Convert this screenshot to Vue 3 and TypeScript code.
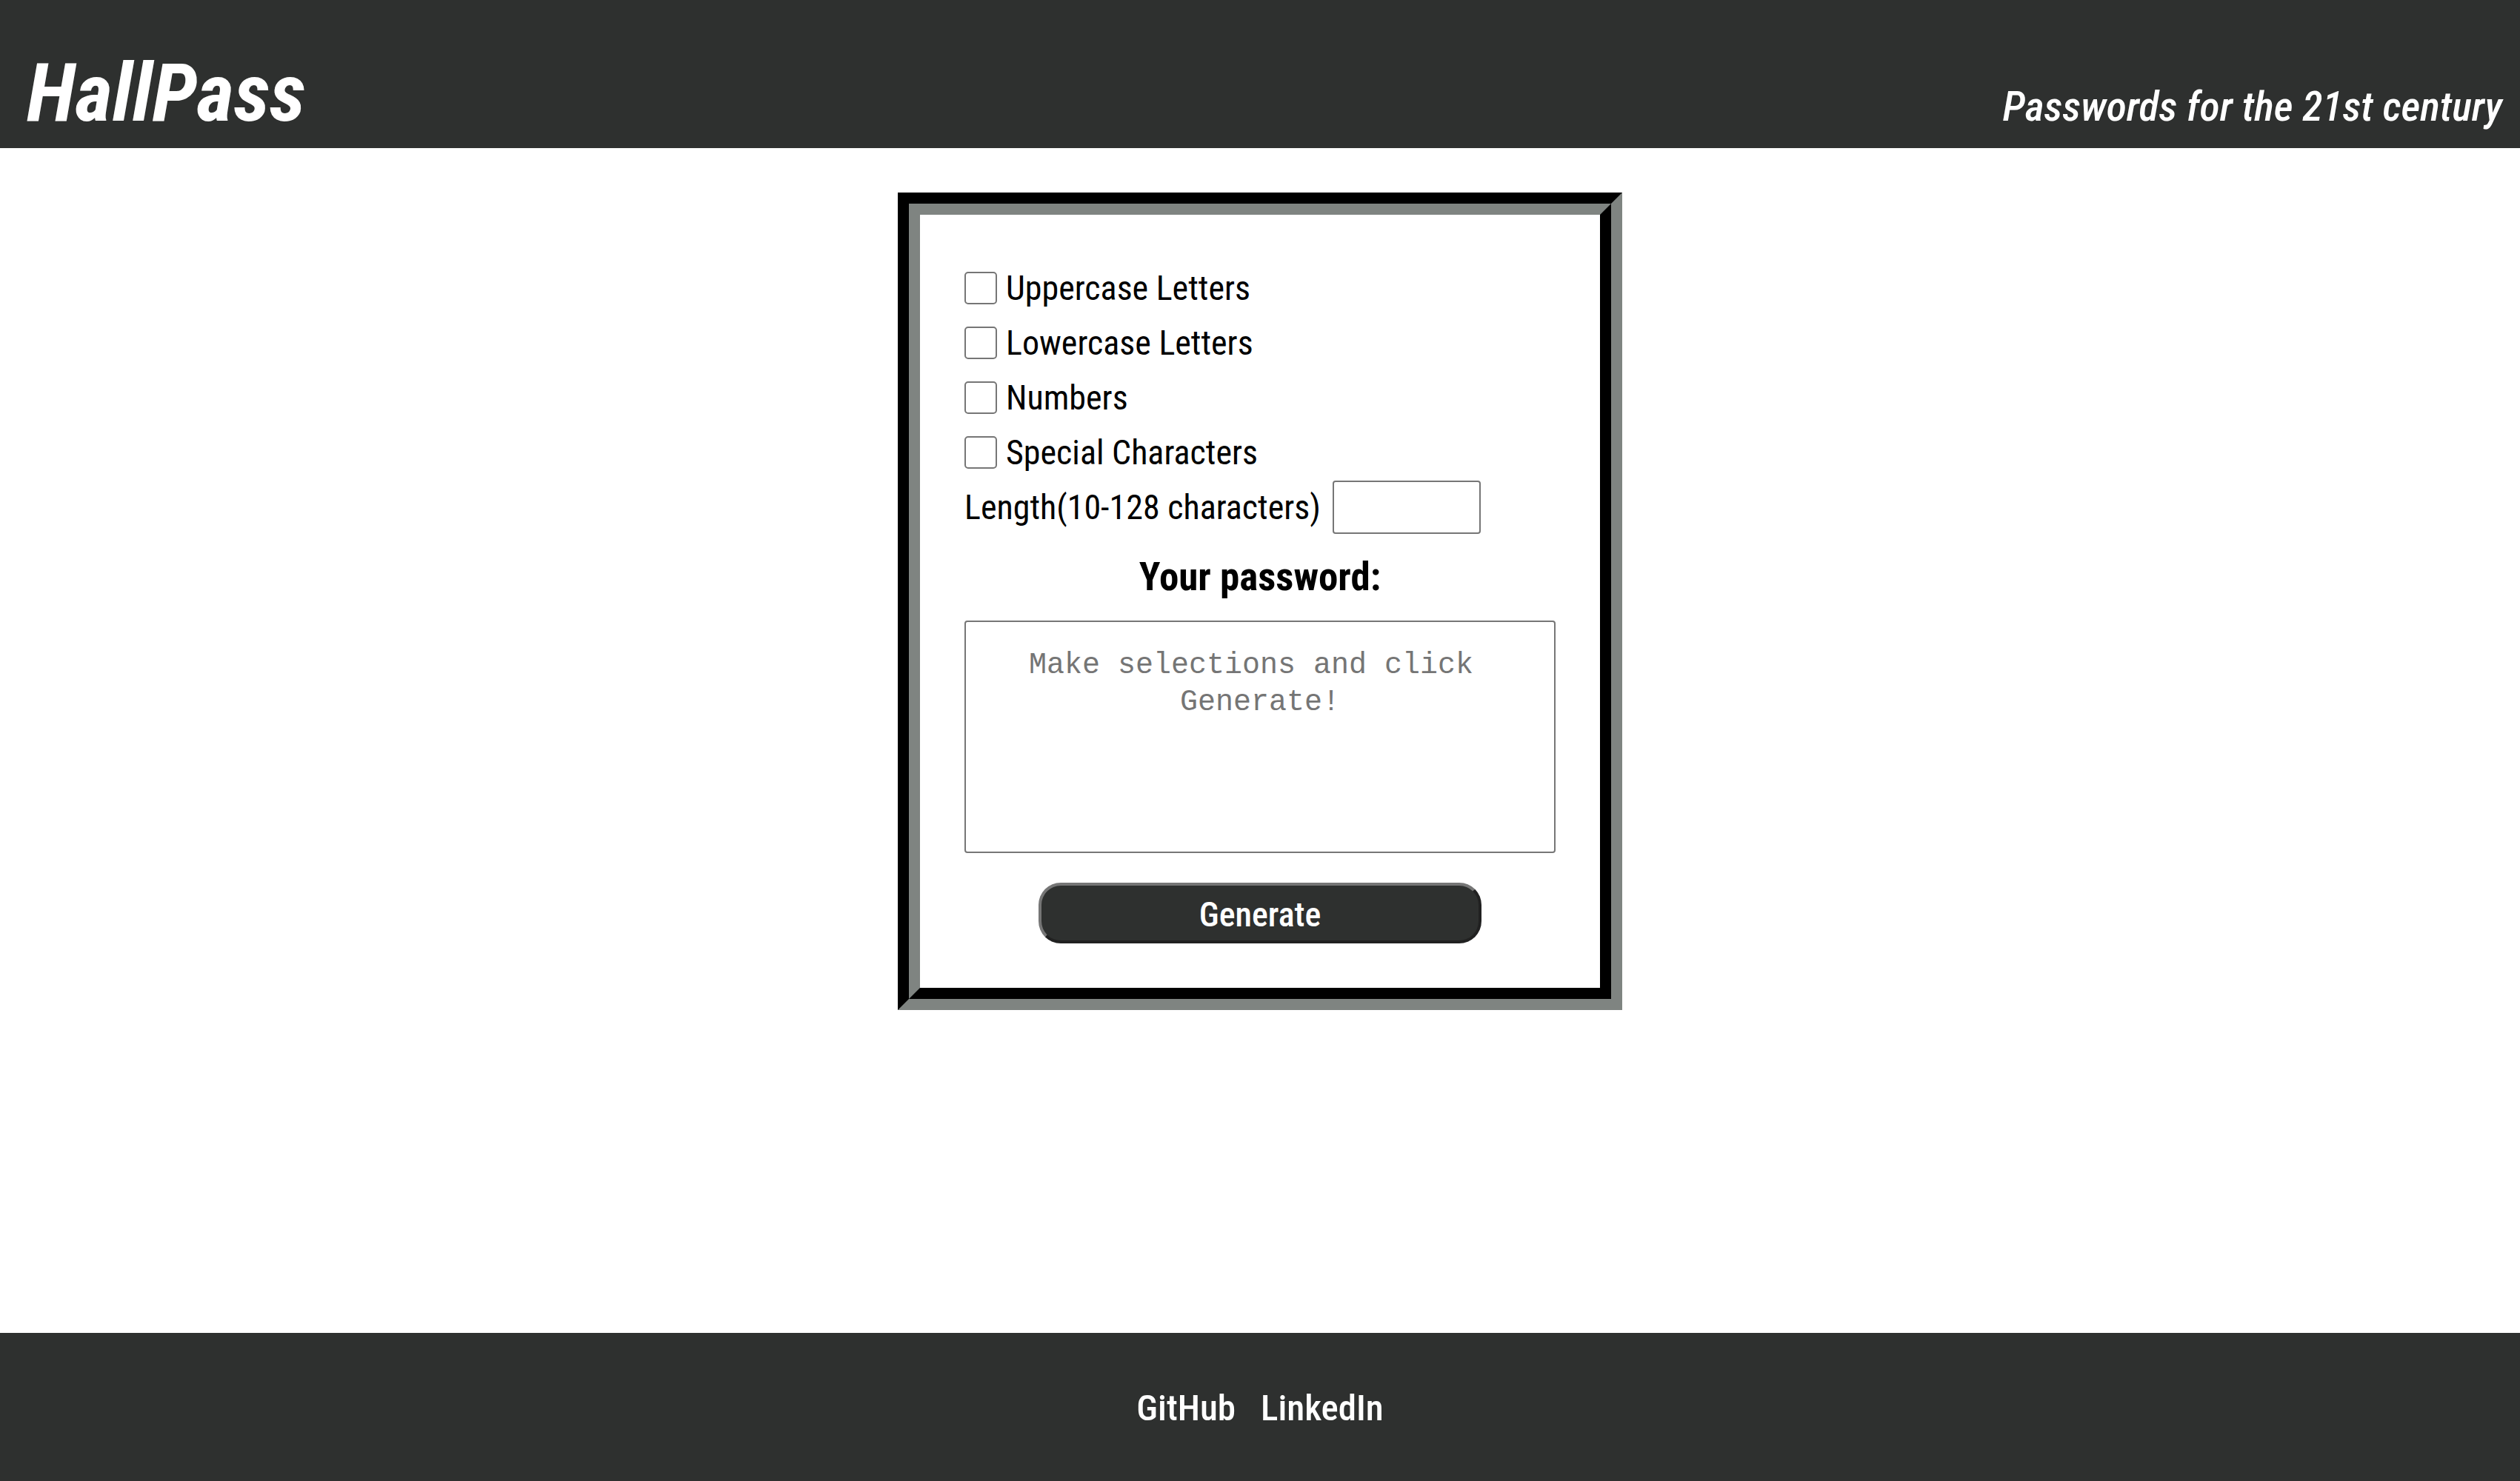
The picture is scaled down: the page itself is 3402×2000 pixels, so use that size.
<script setup lang="ts">
import { reactive, ref } from 'vue'

type SetKey = 'upper' | 'lower' | 'numbers' | 'special'

interface CharacterSet {
  key: SetKey
  label: string
  chars: string
}

const characterSets: CharacterSet[] = [
  { key: 'upper', label: 'Uppercase Letters', chars: 'ABCDEFGHIJKLMNOPQRSTUVWXYZ' },
  { key: 'lower', label: 'Lowercase Letters', chars: 'abcdefghijklmnopqrstuvwxyz' },
  { key: 'numbers', label: 'Numbers', chars: '0123456789' },
  { key: 'special', label: 'Special Characters', chars: '!#$%&()*+,-./:;<=>?@[]^_{|}~' },
]

const selected = reactive<Record<SetKey, boolean>>({
  upper: false,
  lower: false,
  numbers: false,
  special: false,
})
const length = ref<number | ''>('')
const password = ref('')

function generate(): void {
  const pool = characterSets.filter((set) => selected[set.key]).map((set) => set.chars).join('')
  const count = Number(length.value)
  if (!pool || count < 10 || count > 128) return
  const values = crypto.getRandomValues(new Uint32Array(count))
  password.value = Array.from(values, (value) => pool[value % pool.length]).join('')
}
</script>

<template>
  <div class="page">
    <header class="header">
      <h1 class="title">HallPass</h1>
      <p class="tagline">Passwords for the 21st century</p>
    </header>

    <main class="main">
      <form class="card" @submit.prevent="generate">
        <div v-for="set in characterSets" :key="set.key" class="row">
          <input :id="set.key" v-model="selected[set.key]" class="check" type="checkbox" />
          <label :for="set.key">{{ set.label }}</label>
        </div>
        <div class="row row-length">
          <label for="length">Length(10-128 characters)</label>
          <input id="length" v-model="length" class="length" type="number" min="10" max="128" />
        </div>
        <h2 class="heading"><label for="password">Your password:</label></h2>
        <textarea
          id="password"
          v-model="password"
          class="output"
          readonly
          placeholder="Make selections and click Generate!"
        ></textarea>
        <button class="generate" type="submit">Generate</button>
      </form>
    </main>

    <footer class="footer">
      <a href="#github">GitHub</a>
      <a href="#linkedin">LinkedIn</a>
    </footer>
  </div>
</template>

<style>
body {
  margin: 0;
}
</style>

<style scoped>
.page {
  display: flex;
  flex-direction: column;
  min-height: 100vh;
  background: #fff;
  color: #000;
  font-family: 'Roboto Condensed', 'Liberation Sans Narrow', sans-serif;
  font-size: 46px;
  line-height: 74px;
}

.header {
  display: flex;
  flex-wrap: wrap;
  align-items: baseline;
  justify-content: space-between;
  min-height: 200px;
  padding: 56px 24px 0 36px;
  box-sizing: border-box;
  background: #2e302f;
  color: #fff;
  font-style: italic;
}

.title {
  margin: 0;
  font-size: 110px;
  line-height: 140px;
}

.tagline {
  margin: 0;
  font-size: 56px;
  font-weight: 500;
}

.main {
  display: flex;
  flex: 1;
  align-items: flex-start;
  justify-content: center;
  padding: 60px 0;
}

.card {
  display: flex;
  flex-direction: column;
  width: 978px;
  max-width: 100%;
  padding: 62px 60px 60px;
  box-sizing: border-box;
  border: 30px groove #2e302f;
}

.row {
  display: flex;
  align-items: center;
  gap: 12px;
  min-height: 74px;
}

.row-length {
  gap: 16px;
}

.check {
  appearance: none;
  width: 44px;
  height: 44px;
  margin: 0;
  border: 2px solid #767676;
  border-radius: 5px;
  background: #fff;
}

.check:checked {
  background: #2e302f;
}

.length {
  width: 200px;
  height: 72px;
  margin: 0;
  padding: 0 8px;
  box-sizing: border-box;
  border: 2px solid #767676;
  border-radius: 4px;
  font: inherit;
}

.heading {
  margin: 10px 0 12px;
  font-size: 53px;
  line-height: 94px;
  text-align: center;
}

.output {
  width: 100%;
  height: 314px;
  margin: 0 0 40px;
  padding: 34px 60px;
  box-sizing: border-box;
  border: 2px solid #767676;
  border-radius: 4px;
  font-family: 'Liberation Mono', monospace;
  font-size: 40px;
  line-height: 50px;
  text-align: center;
  white-space: break-spaces;
  resize: none;
}

.output::placeholder {
  color: #757575;
}

.generate {
  align-self: center;
  width: 75%;
  height: 82px;
  padding: 2px 0 0;
  border: 4px outset #767676;
  border-radius: 30px;
  background: #2e302f;
  color: #fff;
  font: inherit;
  font-weight: 500;
}

.footer {
  display: flex;
  align-items: center;
  justify-content: center;
  gap: 34px;
  min-height: 200px;
  padding-top: 4px;
  box-sizing: border-box;
  background: #2e302f;
  font-size: 49px;
  font-weight: 500;
}

.footer a {
  color: #fff;
  text-decoration: none;
}
</style>
